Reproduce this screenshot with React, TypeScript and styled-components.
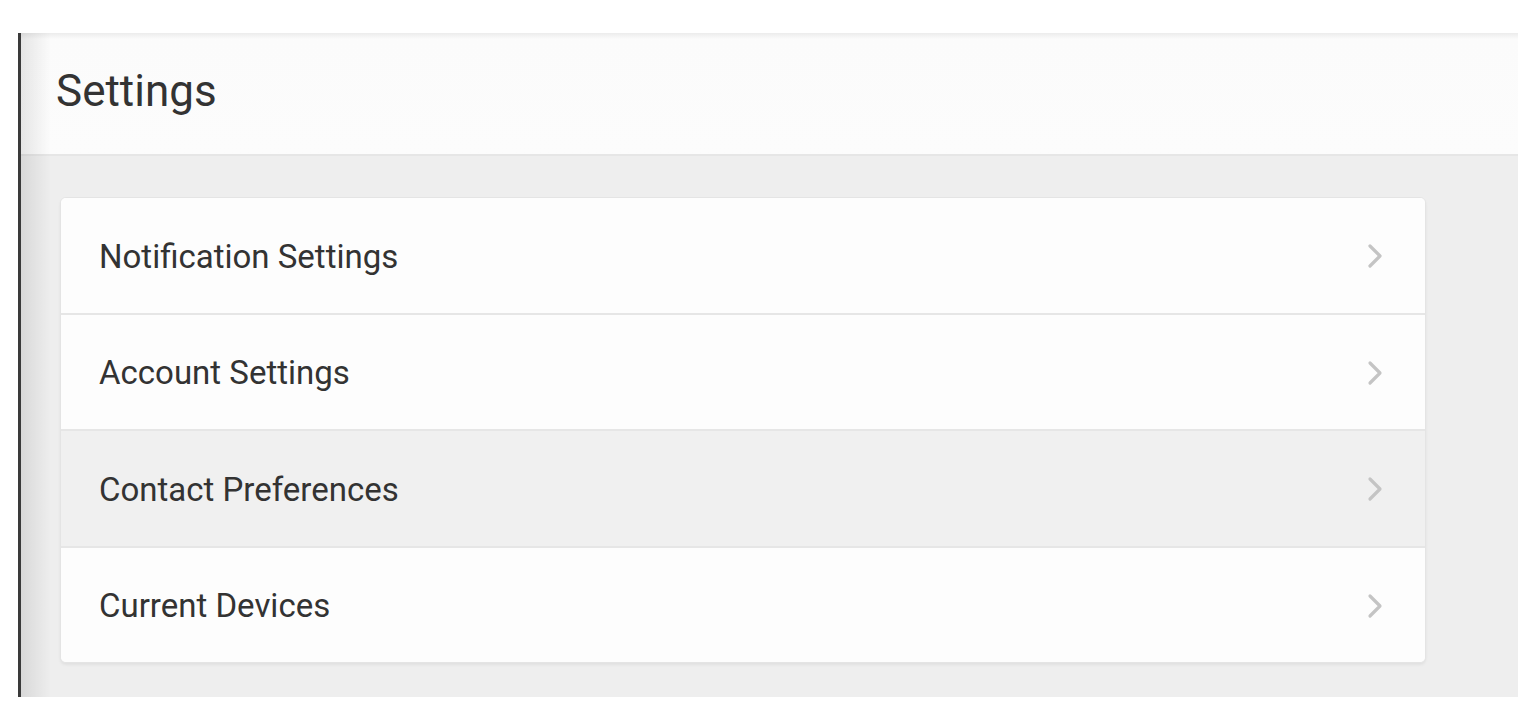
import React from 'react';
import styled, { createGlobalStyle } from 'styled-components';

const GlobalStyle = createGlobalStyle`
  html, body {
    margin: 0;
    padding: 0;
    background: #ffffff;
  }
  body {
    font-family: Roboto, "Liberation Sans", Arial, sans-serif;
  }
`;

const Screen = styled.div`
  padding: 33px 12px 21px 18px;
`;

const Frame = styled.div`
  position: relative;
  width: 1497px;
  height: 664px;
  border-left: 3px solid #3a3a3a;
  display: flex;
  flex-direction: column;
  background: #eeeeee;
  overflow: hidden;

  /* soft shade along the left edge */
  &::after {
    content: '';
    position: absolute;
    top: 0;
    left: 0;
    bottom: 0;
    width: 30px;
    background: linear-gradient(to right, rgba(0, 0, 0, 0.09), rgba(0, 0, 0, 0));
    pointer-events: none;
  }
`;

const Header = styled.header`
  height: 121px;
  flex-shrink: 0;
  display: flex;
  align-items: center;
  padding-left: 35px;
  background: linear-gradient(to bottom, #ececec 0px, #fbfbfb 6px, #fcfcfc 100%);
  border-bottom: 2px solid #e6e6e6;
`;

const Title = styled.h1`
  margin: 0;
  font-size: 44px;
  font-weight: 400;
  color: #333333;
  padding-bottom: 6px;
`;

const Content = styled.main`
  flex: 1;
  padding: 41px 92px 0 39px;
`;

const Card = styled.div`
  width: 1366px;
  background: #fdfdfd;
  border: 1px solid #e4e4e4;
  border-radius: 6px;
  box-shadow: 0 2px 3px rgba(0, 0, 0, 0.06);
  overflow: hidden;
  box-sizing: border-box;
`;

const Row = styled.div<{ $active?: boolean }>`
  height: 114.5px;
  box-sizing: border-box;
  display: flex;
  align-items: center;
  justify-content: space-between;
  padding: 2px 38px 0 38px;
  background: ${(p) => (p.$active ? '#f0f0f0' : '#fdfdfd')};
  cursor: pointer;

  & + & {
    height: 116.5px;
    border-top: 2px solid #e6e6e6;
  }
`;

const Label = styled.span`
  font-size: 33px;
  color: #333333;
`;

const Chevron = styled.svg`
  width: 22px;
  height: 30px;
  flex-shrink: 0;
`;

const items = [
  { label: 'Notification Settings' },
  { label: 'Account Settings' },
  { label: 'Contact Preferences', active: true },
  { label: 'Current Devices' },
];

export default function App() {
  return (
    <>
      <GlobalStyle />
      <Screen>
        <Frame>
          <Header>
            <Title>Settings</Title>
          </Header>
          <Content>
            <Card>
              {items.map((item) => (
                <Row key={item.label} $active={item.active}>
                  <Label>{item.label}</Label>
                  <Chevron viewBox="0 0 22 30">
                    <path
                      d="M5 5 L15 15 L5 25"
                      fill="none"
                      stroke="#c4c4c4"
                      strokeWidth="3.2"
                      strokeLinecap="round"
                      strokeLinejoin="round"
                    />
                  </Chevron>
                </Row>
              ))}
            </Card>
          </Content>
        </Frame>
      </Screen>
    </>
  );
}
